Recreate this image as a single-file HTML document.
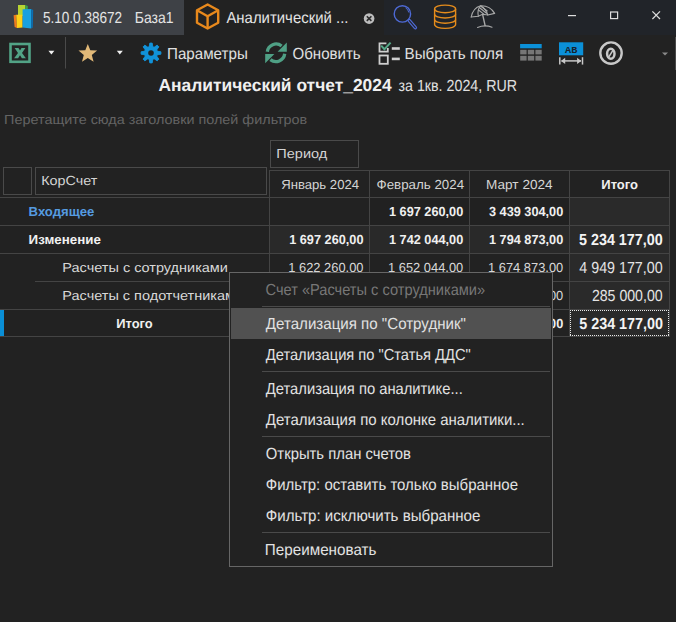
<!DOCTYPE html>
<html><head><meta charset="utf-8"><style>
html,body{margin:0;padding:0;background:#222222;width:676px;height:622px;overflow:hidden}
svg{display:block}
text{font-family:"Liberation Sans",sans-serif;white-space:pre}
</style></head><body>
<svg width="676" height="622" viewBox="0 0 676 622">

<rect x="0" y="0" width="676" height="622" fill="#222222"/>
<rect x="0" y="0" width="184" height="35" fill="#3e4146"/>
<rect x="384" y="0" width="292" height="35" fill="#212429"/>


<!-- logo -->
<g>
  <polygon points="18,5 25.3,5 25.3,16 18,16" fill="#b8d432"/>
  <polygon points="25.3,5 27.8,6 27.8,16 25.3,16" fill="#3aa348"/>
  <polygon points="13.6,15.3 16.2,14.8 17,28 14.6,27" fill="#ef7a1e"/>
  <polygon points="16.2,14.8 22.6,14.8 22.6,27.5 17,28" fill="#ffd117"/>
  <polygon points="22.6,9.3 31.2,9 31.2,28.6 22.6,27.6" fill="#19a1e0"/>
  <polygon points="31.2,9 33.2,10 32.8,27.5 31.2,28.6" fill="#0b6fb3"/>
</g>
<!-- cube -->
<g fill="none" stroke="#e8891c" stroke-width="2.4" stroke-linejoin="round">
  <polygon points="207.6,4.5 218.2,10.3 218.2,22.7 207.6,28.5 197,22.7 197,10.3"/>
  <polyline points="197,10.3 207.6,16.3 218.2,10.3"/>
  <line x1="207.6" y1="16.3" x2="207.6" y2="28.5"/>
</g>
<!-- tab close -->
<circle cx="369.1" cy="18.6" r="5.3" fill="#bdbdbd"/>
<g stroke="#2a2a2a" stroke-width="1.6"><line x1="366.8" y1="16.3" x2="371.4" y2="20.9"/><line x1="371.4" y1="16.3" x2="366.8" y2="20.9"/></g>
<!-- search -->
<g fill="none" stroke="#4e6ad6">
  <circle cx="402.4" cy="13.9" r="8.2" stroke-width="1.4"/>
  <path d="M405.5,7.8 A6.5,6.5 0 0 1 408.8,12.5" stroke-width="1"/>
  <line x1="409.3" y1="20.6" x2="415.3" y2="27.6" stroke-width="3.6" stroke-linecap="round"/>
  <line x1="409.3" y1="20.6" x2="415.3" y2="27.6" stroke="#212429" stroke-width="1.2" stroke-linecap="round"/>
</g>
<!-- database -->
<g fill="none" stroke="#e58c1c" stroke-width="1.4">
  <ellipse cx="445.1" cy="8.9" rx="10.5" ry="3.8"/>
  <path d="M434.6,8.9 V24.6 A10.5,3.8 0 0 0 455.6,24.6 V8.9"/>
  <path d="M434.6,14.2 A10.5,3.8 0 0 0 455.6,14.2"/>
  <path d="M434.6,19.4 A10.5,3.8 0 0 0 455.6,19.4"/>
</g>
<!-- umbrella -->
<g fill="none" stroke="#a8a8a8" stroke-width="1.1" stroke-linecap="round">
  <path d="M471.2,17 Q473,8 480.6,5.8 Q490,5.5 494.6,13.4"/>
  <path d="M471.2,17 L478.3,16.3 L482.6,14.3 L487.8,15 L494.6,13.4"/>
  <path d="M478.3,16.3 Q477,9 480.6,5.8 Q486,9 487.8,15"/>
  <path d="M478.5,10 L484.5,14.6 M479.6,7.8 L486.5,13.2 M481.6,6.8 L487.2,11"/>
  <path d="M482.6,14.3 L485.1,25.6" stroke-width="1.4"/>
  <path d="M477.5,27.4 Q485,24.5 492,27.3"/>
</g>
<!-- window controls -->
<g stroke="#dedede" stroke-width="1.2" fill="none">
  <line x1="568" y1="15.6" x2="576" y2="15.6"/>
  <rect x="610.6" y="12" width="7" height="6.6"/>
  <line x1="652.4" y1="11.4" x2="660" y2="19"/><line x1="660" y1="11.4" x2="652.4" y2="19"/>
</g>


<!-- excel -->
<g>
  <rect x="10.5" y="44" width="19" height="17.8" fill="none" stroke="#52a386" stroke-width="2.6"/>
  <polygon points="14.6,47.9 18.5,47.9 20,50.6 21.5,47.9 25.4,47.9 22,53 25.9,58.3 21.9,58.3 20,55.3 18.1,58.3 14.1,58.3 18,53" fill="#52a386"/>
</g>
<polygon points="48.4,50.8 54.4,50.8 51.4,54.6" fill="#f0f0f0"/>
<rect x="65" y="37" width="1" height="31.5" fill="#4a4a4a"/>
<!-- star -->
<polygon points="87.8,44 90.3,50.3 97.1,50.6 91.8,54.9 93.6,61.8 87.8,57.9 82,61.8 83.8,54.9 78.5,50.6 85.3,50.3" fill="#e2b978"/>
<polygon points="116.8,50.8 122.8,50.8 119.8,54.6" fill="#f0f0f0"/>
<!-- gear -->
<g transform="translate(151,53)" fill="#1192d9" stroke="#1192d9" stroke-width="0.9" stroke-linejoin="round">
  <circle r="6.5"/>
  <polygon transform="rotate(0)" points="-2.0,-5 2.0,-5 1.2,-9.9 -1.2,-9.9"/><polygon transform="rotate(45)" points="-2.0,-5 2.0,-5 1.2,-9.9 -1.2,-9.9"/><polygon transform="rotate(90)" points="-2.0,-5 2.0,-5 1.2,-9.9 -1.2,-9.9"/><polygon transform="rotate(135)" points="-2.0,-5 2.0,-5 1.2,-9.9 -1.2,-9.9"/><polygon transform="rotate(180)" points="-2.0,-5 2.0,-5 1.2,-9.9 -1.2,-9.9"/><polygon transform="rotate(225)" points="-2.0,-5 2.0,-5 1.2,-9.9 -1.2,-9.9"/><polygon transform="rotate(270)" points="-2.0,-5 2.0,-5 1.2,-9.9 -1.2,-9.9"/><polygon transform="rotate(315)" points="-2.0,-5 2.0,-5 1.2,-9.9 -1.2,-9.9"/>
  <circle r="2.8" fill="#222222" stroke="none"/>
</g>
<!-- refresh -->
<g fill="none" stroke="#4fa085" stroke-width="3.3">
  <path d="M267.3,51.8 A8.8,8.8 0 0 1 281.6,46"/>
  <path d="M284.7,53.8 A8.8,8.8 0 0 1 270.4,59.6"/>
</g>
<polygon points="286.8,42.6 286.8,51.8 277.6,51.8" fill="#4fa085"/>
<polygon points="265.2,54 274.4,54 265.2,63.2" fill="#4fa085"/>
<!-- checklist -->
<g fill="none" stroke="#cfcfcf" stroke-width="1.8">
  <path d="M386.4,43.4 H379.5 V51.6 H387.8 V48"/>
  <rect x="379.5" y="55.5" width="8.3" height="8.3"/>
</g>
<rect x="391.8" y="47.2" width="8" height="2.6" fill="#cfcfcf"/>
<rect x="391.8" y="57.6" width="8" height="2.6" fill="#cfcfcf"/>
<path d="M381.2,45.6 L384.4,49.2 L390.6,42.6" fill="none" stroke="#55a888" stroke-width="2"/>
<!-- table icon -->
<rect x="520.1" y="44" width="21.6" height="4.3" fill="#0b90d8"/>
<g fill="#767676">
  <rect x="520.2" y="49.8" width="6.4" height="4.6"/><rect x="527.8" y="49.8" width="6.4" height="4.6"/><rect x="535.4" y="49.8" width="6.3" height="4.6"/>
  <rect x="520.2" y="55.8" width="6.4" height="4.8"/><rect x="527.8" y="55.8" width="6.4" height="4.8"/><rect x="535.4" y="55.8" width="6.3" height="4.8"/>
</g>
<!-- AB icon -->
<rect x="559" y="42.3" width="24.2" height="13" fill="#0b90d8"/>
<text x="571.2" y="52.5" style="font-family:'Liberation Mono',monospace;font-weight:bold;font-size:9.6px" fill="#17222c" text-anchor="middle" textLength="12.2" lengthAdjust="spacingAndGlyphs">AB</text>
<g stroke="#c8c8c8" stroke-width="1.5" fill="none">
  <line x1="559.8" y1="57.2" x2="559.8" y2="64.6"/><line x1="582.5" y1="57.2" x2="582.5" y2="64.6"/>
  <line x1="561.5" y1="60.9" x2="581" y2="60.9"/>
</g>
<polygon points="561,60.9 565.2,57.8 565.2,64" fill="#c8c8c8"/>
<polygon points="581.3,60.9 577.1,57.8 577.1,64" fill="#c8c8c8"/>
<!-- zero -->
<circle cx="611" cy="53.1" r="10.7" fill="none" stroke="#c8c8c8" stroke-width="2.4"/>
<ellipse cx="610.8" cy="53.7" rx="3.7" ry="4.95" fill="none" stroke="#c8c8c8" stroke-width="2.5"/>
<line x1="608.4" y1="57.6" x2="613.2" y2="49.8" stroke="#c8c8c8" stroke-width="1.5"/>
<polygon points="662,52.4 668,52.4 665,55.6" fill="#8a8a8a"/>
<rect x="675" y="37" width="1" height="33" fill="#4a4a4a"/>


<!-- filter boxes -->
<g fill="none" stroke="#4a4a4a" stroke-width="1">
  <rect x="270.5" y="140.5" width="88" height="27"/>
  <rect x="3.5" y="167.5" width="28" height="27"/>
  <rect x="35.5" y="167.5" width="231" height="27"/>
</g>
<!-- cell backgrounds -->
<rect x="270" y="226" width="400" height="27" fill="#292929"/>
<rect x="570" y="198" width="100" height="139" fill="#2a2a2a"/>
<rect x="370" y="198" width="200" height="27" fill="#212121"/>
<!-- grid -->
<g fill="#444444">
  <rect x="269" y="170" width="401" height="1"/>
  <rect x="0" y="197" width="670" height="1"/>
  <rect x="0" y="225" width="670" height="1"/>
  <rect x="0" y="253" width="670" height="1"/>
  <rect x="35" y="281" width="635" height="1"/>
  <rect x="0" y="309" width="670" height="1"/>
  <rect x="0" y="336" width="670" height="1"/>
  <rect x="269" y="170" width="1" height="167"/>
  <rect x="369" y="170" width="1" height="167"/>
  <rect x="469" y="170" width="1" height="167"/>
  <rect x="569" y="170" width="1" height="167"/>
  <rect x="669" y="170" width="1" height="167"/>
</g>
<rect x="0" y="310" width="4" height="26" fill="#0a8fd6"/>
<g fill="#e8e8e8"><rect x="570" y="310" width="1" height="1"/><rect x="570" y="335" width="1" height="1"/><rect x="572" y="310" width="1" height="1"/><rect x="572" y="335" width="1" height="1"/><rect x="574" y="310" width="1" height="1"/><rect x="574" y="335" width="1" height="1"/><rect x="576" y="310" width="1" height="1"/><rect x="576" y="335" width="1" height="1"/><rect x="578" y="310" width="1" height="1"/><rect x="578" y="335" width="1" height="1"/><rect x="580" y="310" width="1" height="1"/><rect x="580" y="335" width="1" height="1"/><rect x="582" y="310" width="1" height="1"/><rect x="582" y="335" width="1" height="1"/><rect x="584" y="310" width="1" height="1"/><rect x="584" y="335" width="1" height="1"/><rect x="586" y="310" width="1" height="1"/><rect x="586" y="335" width="1" height="1"/><rect x="588" y="310" width="1" height="1"/><rect x="588" y="335" width="1" height="1"/><rect x="590" y="310" width="1" height="1"/><rect x="590" y="335" width="1" height="1"/><rect x="592" y="310" width="1" height="1"/><rect x="592" y="335" width="1" height="1"/><rect x="594" y="310" width="1" height="1"/><rect x="594" y="335" width="1" height="1"/><rect x="596" y="310" width="1" height="1"/><rect x="596" y="335" width="1" height="1"/><rect x="598" y="310" width="1" height="1"/><rect x="598" y="335" width="1" height="1"/><rect x="600" y="310" width="1" height="1"/><rect x="600" y="335" width="1" height="1"/><rect x="602" y="310" width="1" height="1"/><rect x="602" y="335" width="1" height="1"/><rect x="604" y="310" width="1" height="1"/><rect x="604" y="335" width="1" height="1"/><rect x="606" y="310" width="1" height="1"/><rect x="606" y="335" width="1" height="1"/><rect x="608" y="310" width="1" height="1"/><rect x="608" y="335" width="1" height="1"/><rect x="610" y="310" width="1" height="1"/><rect x="610" y="335" width="1" height="1"/><rect x="612" y="310" width="1" height="1"/><rect x="612" y="335" width="1" height="1"/><rect x="614" y="310" width="1" height="1"/><rect x="614" y="335" width="1" height="1"/><rect x="616" y="310" width="1" height="1"/><rect x="616" y="335" width="1" height="1"/><rect x="618" y="310" width="1" height="1"/><rect x="618" y="335" width="1" height="1"/><rect x="620" y="310" width="1" height="1"/><rect x="620" y="335" width="1" height="1"/><rect x="622" y="310" width="1" height="1"/><rect x="622" y="335" width="1" height="1"/><rect x="624" y="310" width="1" height="1"/><rect x="624" y="335" width="1" height="1"/><rect x="626" y="310" width="1" height="1"/><rect x="626" y="335" width="1" height="1"/><rect x="628" y="310" width="1" height="1"/><rect x="628" y="335" width="1" height="1"/><rect x="630" y="310" width="1" height="1"/><rect x="630" y="335" width="1" height="1"/><rect x="632" y="310" width="1" height="1"/><rect x="632" y="335" width="1" height="1"/><rect x="634" y="310" width="1" height="1"/><rect x="634" y="335" width="1" height="1"/><rect x="636" y="310" width="1" height="1"/><rect x="636" y="335" width="1" height="1"/><rect x="638" y="310" width="1" height="1"/><rect x="638" y="335" width="1" height="1"/><rect x="640" y="310" width="1" height="1"/><rect x="640" y="335" width="1" height="1"/><rect x="642" y="310" width="1" height="1"/><rect x="642" y="335" width="1" height="1"/><rect x="644" y="310" width="1" height="1"/><rect x="644" y="335" width="1" height="1"/><rect x="646" y="310" width="1" height="1"/><rect x="646" y="335" width="1" height="1"/><rect x="648" y="310" width="1" height="1"/><rect x="648" y="335" width="1" height="1"/><rect x="650" y="310" width="1" height="1"/><rect x="650" y="335" width="1" height="1"/><rect x="652" y="310" width="1" height="1"/><rect x="652" y="335" width="1" height="1"/><rect x="654" y="310" width="1" height="1"/><rect x="654" y="335" width="1" height="1"/><rect x="656" y="310" width="1" height="1"/><rect x="656" y="335" width="1" height="1"/><rect x="658" y="310" width="1" height="1"/><rect x="658" y="335" width="1" height="1"/><rect x="660" y="310" width="1" height="1"/><rect x="660" y="335" width="1" height="1"/><rect x="662" y="310" width="1" height="1"/><rect x="662" y="335" width="1" height="1"/><rect x="664" y="310" width="1" height="1"/><rect x="664" y="335" width="1" height="1"/><rect x="666" y="310" width="1" height="1"/><rect x="666" y="335" width="1" height="1"/><rect x="668" y="310" width="1" height="1"/><rect x="668" y="335" width="1" height="1"/><rect x="570" y="310" width="1" height="1"/><rect x="668" y="310" width="1" height="1"/><rect x="570" y="312" width="1" height="1"/><rect x="668" y="312" width="1" height="1"/><rect x="570" y="314" width="1" height="1"/><rect x="668" y="314" width="1" height="1"/><rect x="570" y="316" width="1" height="1"/><rect x="668" y="316" width="1" height="1"/><rect x="570" y="318" width="1" height="1"/><rect x="668" y="318" width="1" height="1"/><rect x="570" y="320" width="1" height="1"/><rect x="668" y="320" width="1" height="1"/><rect x="570" y="322" width="1" height="1"/><rect x="668" y="322" width="1" height="1"/><rect x="570" y="324" width="1" height="1"/><rect x="668" y="324" width="1" height="1"/><rect x="570" y="326" width="1" height="1"/><rect x="668" y="326" width="1" height="1"/><rect x="570" y="328" width="1" height="1"/><rect x="668" y="328" width="1" height="1"/><rect x="570" y="330" width="1" height="1"/><rect x="668" y="330" width="1" height="1"/><rect x="570" y="332" width="1" height="1"/><rect x="668" y="332" width="1" height="1"/><rect x="570" y="334" width="1" height="1"/><rect x="668" y="334" width="1" height="1"/></g>

<text x="42.90" y="23.00" font-size="16.0" font-weight="normal" fill="#e4e4e4" textLength="79.21" lengthAdjust="spacingAndGlyphs" text-rendering="geometricPrecision">5.10.0.38672</text>
<text x="134.73" y="23.00" font-size="16.0" font-weight="normal" fill="#e4e4e4" textLength="38.79" lengthAdjust="spacingAndGlyphs" text-rendering="geometricPrecision">База1</text>
<text x="226.40" y="23.00" font-size="16.0" font-weight="normal" fill="#e4e4e4" textLength="122.05" lengthAdjust="spacingAndGlyphs" text-rendering="geometricPrecision">Аналитический ...</text>
<text x="167.05" y="59.00" font-size="16.0" font-weight="normal" fill="#e0e0e0" textLength="80.72" lengthAdjust="spacingAndGlyphs" text-rendering="geometricPrecision">Параметры</text>
<text x="292.50" y="59.00" font-size="16.0" font-weight="normal" fill="#e0e0e0" textLength="68.22" lengthAdjust="spacingAndGlyphs" text-rendering="geometricPrecision">Обновить</text>
<text x="404.55" y="59.00" font-size="16.0" font-weight="normal" fill="#e0e0e0" textLength="98.58" lengthAdjust="spacingAndGlyphs" text-rendering="geometricPrecision">Выбрать поля</text>
<text x="158.40" y="91.00" font-size="17.4" font-weight="bold" fill="#f0f0f0" textLength="233.27" lengthAdjust="spacingAndGlyphs" text-rendering="geometricPrecision">Аналитический отчет_2024</text>
<text x="398.50" y="91.00" font-size="16.0" font-weight="normal" fill="#e0e0e0" textLength="118.49" lengthAdjust="spacingAndGlyphs" text-rendering="geometricPrecision">за 1кв. 2024, RUR</text>
<text x="4.10" y="124.00" font-size="13.1" font-weight="normal" fill="#646464" textLength="303.15" lengthAdjust="spacingAndGlyphs" text-rendering="geometricPrecision">Перетащите сюда заголовки полей фильтров</text>
<text x="276.39" y="158.00" font-size="13.1" font-weight="normal" fill="#d4d4d4" textLength="50.91" lengthAdjust="spacingAndGlyphs" text-rendering="geometricPrecision">Период</text>
<text x="41.20" y="185.00" font-size="13.1" font-weight="normal" fill="#d4d4d4" textLength="56.09" lengthAdjust="spacingAndGlyphs" text-rendering="geometricPrecision">КорСчет</text>
<text x="281.20" y="189.00" font-size="13.1" font-weight="normal" fill="#d4d4d4" textLength="77.88" lengthAdjust="spacingAndGlyphs" text-rendering="geometricPrecision">Январь 2024</text>
<text x="376.50" y="189.00" font-size="13.1" font-weight="normal" fill="#d4d4d4" textLength="87.59" lengthAdjust="spacingAndGlyphs" text-rendering="geometricPrecision">Февраль 2024</text>
<text x="486.06" y="189.00" font-size="13.1" font-weight="normal" fill="#d4d4d4" textLength="66.63" lengthAdjust="spacingAndGlyphs" text-rendering="geometricPrecision">Март 2024</text>
<text x="601.30" y="189.00" font-size="13.1" font-weight="bold" fill="#f0f0f0" textLength="36.70" lengthAdjust="spacingAndGlyphs" text-rendering="geometricPrecision">Итого</text>
<text x="28.60" y="216.00" font-size="13.1" font-weight="bold" fill="#559be0" textLength="65.68" lengthAdjust="spacingAndGlyphs" text-rendering="geometricPrecision">Входящее</text>
<text x="28.60" y="244.00" font-size="13.1" font-weight="bold" fill="#f0f0f0" textLength="72.29" lengthAdjust="spacingAndGlyphs" text-rendering="geometricPrecision">Изменение</text>
<text x="62.39" y="272.00" font-size="13.1" font-weight="normal" fill="#d8d8d8" textLength="165.55" lengthAdjust="spacingAndGlyphs" text-rendering="geometricPrecision">Расчеты с сотрудниками</text>
<text x="62.39" y="300.00" font-size="13.1" font-weight="normal" fill="#d8d8d8" textLength="172.61" lengthAdjust="spacingAndGlyphs" text-rendering="geometricPrecision">Расчеты с подотчетникам</text>
<text x="116.30" y="328.00" font-size="13.1" font-weight="bold" fill="#f0f0f0" textLength="36.40" lengthAdjust="spacingAndGlyphs" text-rendering="geometricPrecision">Итого</text>
<text x="389.00" y="216.00" font-size="13.1" font-weight="bold" fill="#f0f0f0" textLength="74.27" lengthAdjust="spacingAndGlyphs" text-rendering="geometricPrecision">1 697 260,00</text>
<text x="489.00" y="216.00" font-size="13.1" font-weight="bold" fill="#f0f0f0" textLength="74.27" lengthAdjust="spacingAndGlyphs" text-rendering="geometricPrecision">3 439 304,00</text>
<text x="289.20" y="244.00" font-size="13.1" font-weight="bold" fill="#f0f0f0" textLength="74.27" lengthAdjust="spacingAndGlyphs" text-rendering="geometricPrecision">1 697 260,00</text>
<text x="389.00" y="244.00" font-size="13.1" font-weight="bold" fill="#f0f0f0" textLength="74.27" lengthAdjust="spacingAndGlyphs" text-rendering="geometricPrecision">1 742 044,00</text>
<text x="489.00" y="244.00" font-size="13.1" font-weight="bold" fill="#f0f0f0" textLength="74.27" lengthAdjust="spacingAndGlyphs" text-rendering="geometricPrecision">1 794 873,00</text>
<text x="288.22" y="272.00" font-size="13.1" font-weight="normal" fill="#d8d8d8" textLength="75.26" lengthAdjust="spacingAndGlyphs" text-rendering="geometricPrecision">1 622 260,00</text>
<text x="388.02" y="272.00" font-size="13.1" font-weight="normal" fill="#d8d8d8" textLength="75.26" lengthAdjust="spacingAndGlyphs" text-rendering="geometricPrecision">1 652 044,00</text>
<text x="488.02" y="272.00" font-size="13.1" font-weight="normal" fill="#d8d8d8" textLength="75.26" lengthAdjust="spacingAndGlyphs" text-rendering="geometricPrecision">1 674 873,00</text>
<text x="488.02" y="300.00" font-size="13.1" font-weight="normal" fill="#d8d8d8" textLength="75.26" lengthAdjust="spacingAndGlyphs" text-rendering="geometricPrecision">1 000 000,00</text>
<text x="489.00" y="328.00" font-size="13.1" font-weight="bold" fill="#f0f0f0" textLength="74.27" lengthAdjust="spacingAndGlyphs" text-rendering="geometricPrecision">1 000 000,00</text>
<text x="579.00" y="245.00" font-size="16.0" font-weight="bold" fill="#f4f4f4" textLength="83.71" lengthAdjust="spacingAndGlyphs" text-rendering="geometricPrecision">5 234 177,00</text>
<text x="579.30" y="273.00" font-size="16.0" font-weight="normal" fill="#e4e4e4" textLength="83.31" lengthAdjust="spacingAndGlyphs" text-rendering="geometricPrecision">4 949 177,00</text>
<text x="591.90" y="301.00" font-size="16.0" font-weight="normal" fill="#e4e4e4" textLength="70.71" lengthAdjust="spacingAndGlyphs" text-rendering="geometricPrecision">285 000,00</text>
<text x="579.20" y="329.00" font-size="16.0" font-weight="bold" fill="#f4f4f4" textLength="83.81" lengthAdjust="spacingAndGlyphs" text-rendering="geometricPrecision">5 234 177,00</text>

<rect x="229.5" y="272.5" width="323" height="294" fill="#222222" stroke="#666666" stroke-width="1"/>
<rect x="231" y="308" width="320" height="31" fill="#515151"/>
<g fill="#4a4a4a">
  <rect x="262" y="306" width="288" height="1"/>
  <rect x="262" y="371" width="288" height="1"/>
  <rect x="262" y="436" width="288" height="1"/>
  <rect x="262" y="532" width="288" height="1"/>
</g>

<text x="265.60" y="295.00" font-size="16.0" font-weight="normal" fill="#777777" textLength="219.51" lengthAdjust="spacingAndGlyphs" text-rendering="geometricPrecision">Счет «Расчеты с сотрудниками»</text>
<text x="265.80" y="329.00" font-size="16.0" font-weight="normal" fill="#e2e2e2" textLength="200.14" lengthAdjust="spacingAndGlyphs" text-rendering="geometricPrecision">Детализация по &quot;Сотрудник&quot;</text>
<text x="265.80" y="360.00" font-size="16.0" font-weight="normal" fill="#e2e2e2" textLength="204.92" lengthAdjust="spacingAndGlyphs" text-rendering="geometricPrecision">Детализация по &quot;Статья ДДС&quot;</text>
<text x="265.80" y="394.00" font-size="16.0" font-weight="normal" fill="#e2e2e2" textLength="196.93" lengthAdjust="spacingAndGlyphs" text-rendering="geometricPrecision">Детализация по аналитике...</text>
<text x="265.80" y="425.00" font-size="16.0" font-weight="normal" fill="#e2e2e2" textLength="258.95" lengthAdjust="spacingAndGlyphs" text-rendering="geometricPrecision">Детализация по колонке аналитики...</text>
<text x="265.80" y="459.00" font-size="16.0" font-weight="normal" fill="#e2e2e2" textLength="145.16" lengthAdjust="spacingAndGlyphs" text-rendering="geometricPrecision">Открыть план счетов</text>
<text x="265.80" y="490.00" font-size="16.0" font-weight="normal" fill="#e2e2e2" textLength="252.20" lengthAdjust="spacingAndGlyphs" text-rendering="geometricPrecision">Фильтр: оставить только выбранное</text>
<text x="265.80" y="521.00" font-size="16.0" font-weight="normal" fill="#e2e2e2" textLength="214.60" lengthAdjust="spacingAndGlyphs" text-rendering="geometricPrecision">Фильтр: исключить выбранное</text>
<text x="264.85" y="555.00" font-size="16.0" font-weight="normal" fill="#e2e2e2" textLength="111.57" lengthAdjust="spacingAndGlyphs" text-rendering="geometricPrecision">Переименовать</text>
</svg>
</body></html>
